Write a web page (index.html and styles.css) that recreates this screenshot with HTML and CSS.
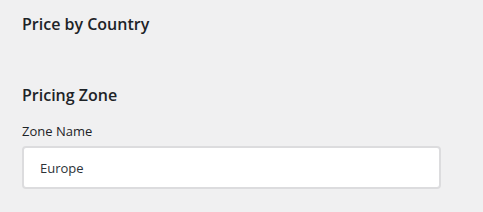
FILE: index.html
```html
<!DOCTYPE html>
<html>
<head>
<meta charset="utf-8">
<link rel="stylesheet" href="styles.css">
</head>
<body>
<div class="page">
  <h2 class="title">Price by Country</h2>
  <h3 class="section">Pricing Zone</h3>
  <label class="label" for="zone">Zone Name</label>
  <input class="input" id="zone" type="text" value="Europe">
</div>
</body>
</html>
```
FILE: styles.css
```css
html, body {
  margin: 0;
  padding: 0;
  background: #f0f0f1;
}
.page {
  padding: 12px 22px 0 22px;
  font-family: "Open Sans", "Noto Sans", sans-serif;
  color: #1d2327;
  display: flex;
  flex-direction: column;
  align-items: flex-start;
}
.title {
  margin: 0;
  font-size: 16px;
  font-weight: 600;
  line-height: 24px;
}
.section {
  margin: 47px 0 0 0;
  font-size: 16px;
  font-weight: 600;
  line-height: 24px;
}
.label {
  margin-top: 15px;
  font-size: 13px;
  line-height: 18px;
}
.input {
  margin-top: 6px;
  box-sizing: border-box;
  width: 419px;
  height: 43px;
  border: 2px solid #dcdcde;
  border-radius: 4px;
  background: #fff;
  padding: 0 16px;
  font-family: "Open Sans", "Noto Sans", sans-serif;
  font-size: 13px;
  color: #2c3338;
  outline: none;
}
```
